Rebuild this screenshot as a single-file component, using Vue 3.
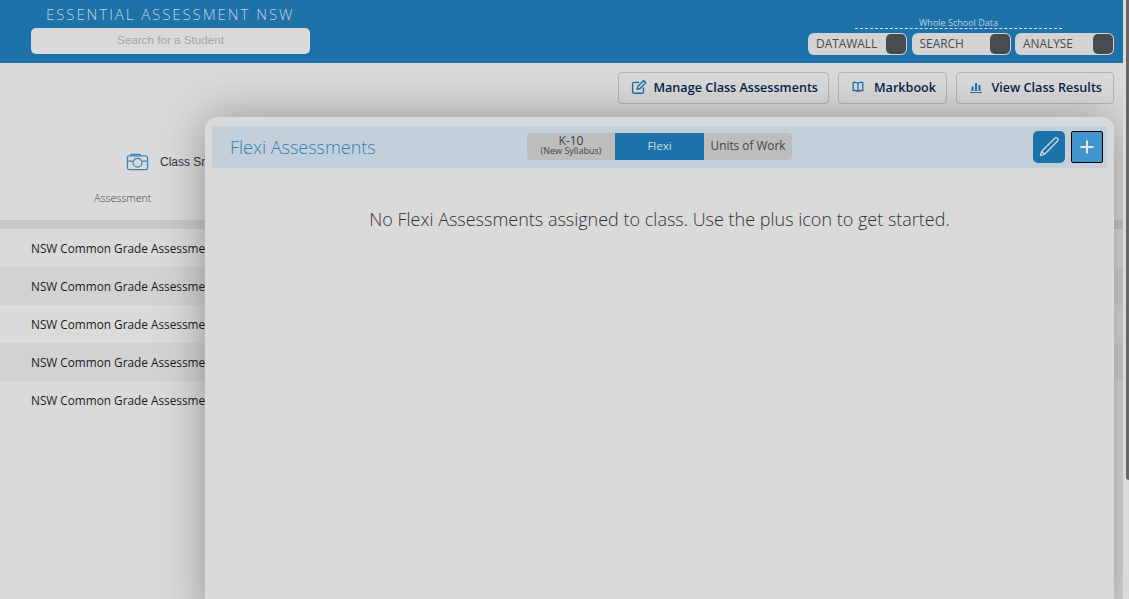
<script setup>
const rows = [0, 1, 2, 3, 4]
</script>

<template>
  <div class="page">
    <header class="top">
      <div class="brand">
        <div class="title">ESSENTIAL ASSESSMENT NSW</div>
        <div class="search">Search for a Student</div>
      </div>
      <div class="whole">
        <div class="whole-label">Whole School Data</div>
        <div class="pills">
          <div class="pill" v-for="p in ['DATAWALL', 'SEARCH', 'ANALYSE']" :key="p">
            <span>{{ p }}</span><i class="knob"></i>
          </div>
        </div>
      </div>
    </header>

    <div class="actions">
      <button class="act manage">
        <svg width="16" height="16" viewBox="0 0 16 16" fill="none" stroke="#1d72aa" stroke-width="1.4"><path d="M12.5 8.500v4.200a1.600 1.600 0 0 1-1.600 1.600H3.200a1.600 1.600 0 0 1-1.600-1.600V5a1.600 1.600 0 0 1 1.600-1.600h5"/><path d="M6.200 10.200l.5-2.600 6-6 2.100 2.100-6 6z" stroke-linejoin="round"/></svg>
        Manage Class Assessments
      </button>
      <button class="act mark">
        <svg width="14" height="14" viewBox="0 0 14 14" fill="none" stroke="#1d72aa" stroke-width="1.300"><path d="M7 3.200C6 2.400 4.200 2.200 2.200 2.400v8.200c2-.2 3.800 0 4.800.8 1-.8 2.800-1 4.800-.8V2.400C9.800 2.200 8 2.400 7 3.200zM7 3.200v8.200"/></svg>
        Markbook
      </button>
      <button class="act view">
        <svg width="14" height="14" viewBox="0 0 14 14" fill="#1d72aa"><rect x="2.500" y="6.500" width="2" height="4.500"/><rect x="6" y="3" width="2" height="8"/><rect x="9.500" y="5" width="2" height="6"/><rect x="1" y="12" width="12" height="1"/></svg>
        View Class Results
      </button>
    </div>

    <div class="snap">
      <svg width="23" height="20" viewBox="0 0 24 20" fill="none" stroke="#3d84b3" stroke-width="1.300"><rect x="1.500" y="3.500" width="21" height="14.500" rx="2"/><circle cx="12" cy="10.700" r="4.600"/><path d="M1.500 9h5.500M17 9h5.500M5 3.500V2h3.500v1.500"/><path d="M8.500 3.500l1-1.500h5l1 1.500"/></svg>
      <span>Class Snapshot</span>
    </div>
    <div class="col-head"><span>Assessment</span></div>
    <div class="band"></div>
    <div class="table">
      <div class="row" v-for="r in rows" :key="r">NSW Common Grade Assessment</div>
    </div>

    <section class="modal">
      <div class="modal-bar">
        <h2>Flexi Assessments</h2>
        <div class="tabs">
          <div class="tab k10"><b>K-10</b><small>(New Syllabus)</small></div>
          <div class="tab on">Flexi</div>
          <div class="tab units">Units of Work</div>
        </div>
        <div class="tools">
          <button class="tool pen">
            <svg width="24" height="24" viewBox="0 0 24 24" fill="none" stroke="#d0d8de" stroke-width="1.300"><path d="M3.500 20.500l1.200-4.300L17.800 3.200a1.900 1.900 0 0 1 2.800 0 1.900 1.900 0 0 1 0 2.800L7.600 19.200z" stroke-linejoin="round"/><path d="M4.700 16.200l2.900 3"/></svg>
          </button>
          <button class="tool plus">
            <svg width="14" height="14" viewBox="0 0 14 14" stroke="#e4e8ea" stroke-width="2"><path d="M7 .5v13M.5 7h13"/></svg>
          </button>
        </div>
      </div>
      <p class="empty">No Flexi Assessments assigned to class. Use the plus icon to get started.</p>
    </section>
    <div class="gutter"><div class="thumb"></div></div>
  </div>
</template>

<style>
html, body { margin: 0; height: 100%; overflow: hidden; background: #dadada; }
</style>

<style scoped>
.page {
  position: relative;
  width: 1129px;
  height: 599px;
  overflow: hidden;
  background: #dadada;
  font-family: "Open Sans", sans-serif;
  color: #222;
}
.top {
  height: 63px;
  width: 1123px;
  background: #1d72aa;
  display: flex;
  justify-content: space-between;
}
.brand { margin-left: 31px; width: 279px; }
.title {
  margin: 5px 0 1px 15px;
  height: 22px;
  font-size: 15px;
  line-height: 18px;
  letter-spacing: 1.920px;
  color: #c5d6e0;
  font-weight: 300;
  white-space: nowrap;
}
.search {
  height: 26px;
  background: #dadada;
  border-radius: 5px;
  text-align: center;
  font: 11.700px/24px "Liberation Sans", sans-serif;
  color: #a8a4a2;
}
.whole { margin-right: 9px; padding-top: 17px; width: 306px; }
.whole-label {
  width: 207px;
  margin-left: 47px;
  height: 11px;
  border-bottom: 1px dashed #dce6ec;
  text-align: center;
  font-size: 9px;
  line-height: 12px;
  color: #bcd0dc;
  white-space: nowrap;
}
.pills { display: flex; justify-content: space-between; margin-top: 4px; }
.pill {
  width: 99px;
  height: 22px;
  box-sizing: border-box;
  background: #d3d3d3;
  border-radius: 6px;
  display: flex;
  align-items: center;
  justify-content: space-between;
  padding: 0 1px 0 8px;
  font-size: 11.900px;
  color: #4a4a4c;
}
.pill span { margin-top: -2px; }
.knob { width: 20px; height: 20px; background: #4a4b4e; border-radius: 5px; }

.actions {
  display: flex;
  justify-content: flex-end;
  gap: 9px;
  width: 1114px;
  padding-top: 9px;
  height: 32px;
}
.act {
  height: 32px;
  box-sizing: border-box;
  display: flex;
  align-items: center;
  justify-content: space-between;
  padding: 0 10px 2px 12px;
  background: transparent;
  border: 1px solid #b4b4b4;
  border-radius: 4px;
  font: 600 12.600px "Open Sans", sans-serif;
  color: #0b1f4b;
  white-space: nowrap;
}
.manage { width: 211px; }
.mark { width: 109px; }
.view { width: 158px; padding-right: 11px; }
.snap {
  display: flex;
  align-items: center;
  gap: 11px;
  margin: 48px 0 0 126px;
  height: 20px;
  font: 12px "Liberation Sans", sans-serif;
  color: #333;
  white-space: nowrap;
}
.col-head { margin: 17px 0 0 94px; height: 18px; font-size: 10.700px; line-height: 18px; color: #444; font-weight: 300; }
.band { height: 9px; margin-top: 13px; background: #c8c8c8; }
.table { width: 1123px; }
.row {
  height: 38px;
  box-sizing: border-box;
  padding: 1px 0 0 31px;
  line-height: 37px;
  font-size: 11.800px;
  color: #1b1b1b;
  white-space: nowrap;
}
.row:nth-child(even) { background: #d2d2d2; }

.modal {
  position: absolute;
  left: 205px;
  top: 117px;
  width: 909px;
  height: 500px;
  box-sizing: border-box;
  padding: 9px 7px 0;
  background: #dadada;
  border-radius: 12px 12px 0 0;
  box-shadow: 0 0 45px rgba(0, 0, 0, .32);
}
.modal-bar {
  position: relative;
  height: 42px;
  background: #c3d0da;
  border-radius: 4px;
  display: flex;
  align-items: center;
}
.modal-bar h2 {
  margin: 0 0 0 18px;
  font-size: 18px;
  font-weight: 300;
  color: #2e7fb5;
  white-space: nowrap;
}
.tabs {
  position: absolute;
  left: 315px;
  top: 7px;
  height: 27px;
  display: flex;
  border-radius: 4px;
  overflow: hidden;
  background: #bdbdbd;
  font-size: 11.500px;
  color: #444;
}
.tab { display: flex; flex-direction: column; align-items: center; justify-content: center; padding-bottom: 3px; box-sizing: border-box; }
.k10 { width: 88px; padding-bottom: 2px; }
.k10 b { font-weight: 400; font-size: 12px; line-height: 10px; }
.k10 small { font-size: 9px; line-height: 9px; }
.on { width: 89px; background: #1d72aa; color: #cfdde6; }
.units { width: 88px; font-size: 11.800px; }
.tools { margin-left: auto; margin-right: 4px; display: flex; gap: 6px; }
.tool {
  width: 32px;
  height: 32px;
  padding: 0;
  border: 0;
  border-radius: 5px;
  display: flex;
  align-items: center;
  justify-content: center;
}
.pen { background: #1d72aa; }
.plus { background: #4095cd; border: 1px solid #000; border-radius: 2px; }
.empty {
  margin: 39px 0 0;
  text-align: center;
  font-size: 18px;
  font-weight: 300;
  color: #333;
}
.gutter {
  position: absolute;
  right: 0;
  top: 0;
  bottom: 0;
  width: 6px;
  background: #dadada;
}
.thumb {
  width: 3px;
  height: 480px;
  margin-left: 3px;
  background: #666;
  border-radius: 0 0 0 3px;
}
</style>
